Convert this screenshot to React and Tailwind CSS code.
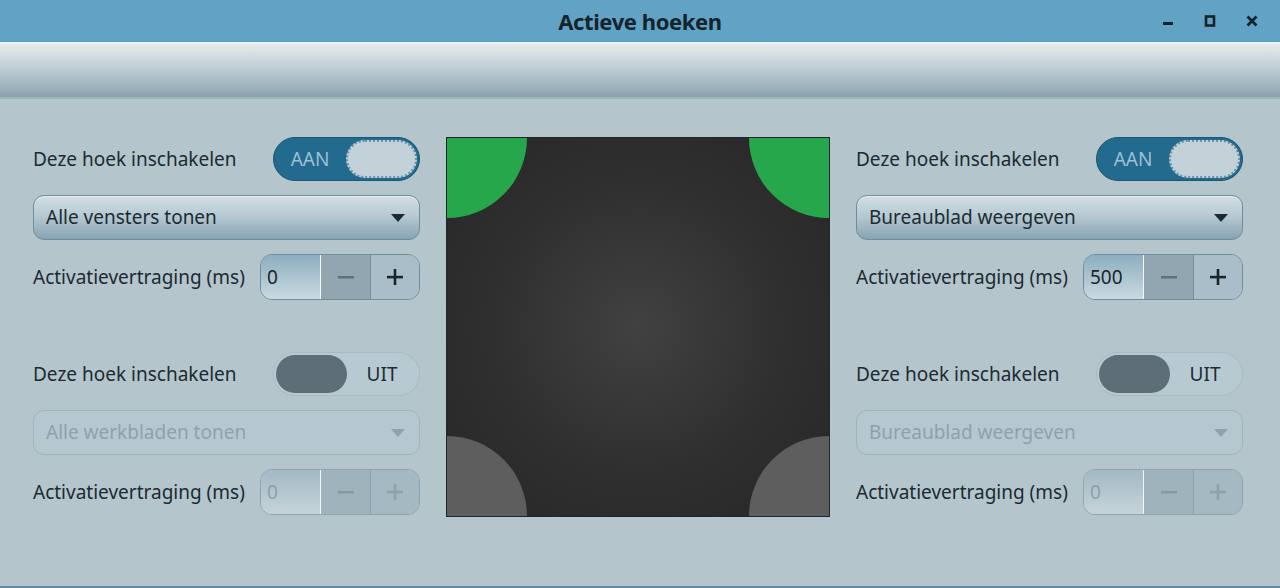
import React from 'react'

function Toggle({ on }) {
  if (on) {
    return (
      <div className="w-[147px] h-[44px] rounded-full bg-[#226a8e] border border-[#1b5673] flex items-center p-[2px]">
        <span className="flex-1 text-center text-[19px] text-[#9ec0d2] pr-[2px]">AAN</span>
        <div className="w-[71px] h-full rounded-full bg-[#c3d2d8] border-2 border-dotted border-[#6b93a8]" />
      </div>
    )
  }
  return (
    <div className="w-[147px] h-[44px] rounded-full bg-[#b8cad1] border border-[#a7bbc3] flex items-center p-[2px]">
      <div className="w-[71px] h-full rounded-full bg-[#5e6e76]" />
      <span className="flex-1 text-center text-[19px] text-[#1d2b33]">UIT</span>
    </div>
  )
}

function Select({ label, disabled }) {
  return (
    <div
      className={
        disabled
          ? 'h-[45px] rounded-[11px] border border-[#9fb4bd] bg-[#b6c8cf] flex items-center justify-between pl-[12px] pr-[14px]'
          : 'h-[45px] rounded-[11px] border border-[#6f8d9b] bg-gradient-to-b from-[#d3dfe4] via-[#b3c7d0] to-[#87a3b2] shadow-[inset_0_1px_0_#e6eef1] flex items-center justify-between pl-[12px] pr-[14px]'
      }
    >
      <span className={disabled ? 'text-[19px] text-[#8ea2ab]' : 'text-[19px] text-[#1c2a31]'}>{label}</span>
      <svg width="14" height="8" viewBox="0 0 14 8">
        <path d="M0 0 L14 0 L7 8 Z" fill={disabled ? '#8ea2ab' : '#1c2a31'} />
      </svg>
    </div>
  )
}

function Spin({ value, disabled }) {
  const ink = disabled ? '#8ea2ab' : '#1a262c'
  return (
    <div
      className={
        disabled
          ? 'w-[160px] h-[46px] rounded-[12px] border border-[#8ea4ae] overflow-hidden flex'
          : 'w-[160px] h-[46px] rounded-[12px] border border-[#6f8d9b] overflow-hidden flex'
      }
    >
      <div
        className={
          disabled
            ? 'w-[60px] bg-gradient-to-b from-[#a3b9c3] to-[#c6d4d9] flex items-center pl-[6px] border-r border-[#f4f7f8]'
            : 'w-[60px] bg-gradient-to-b from-[#8caebf] to-[#cadae0] flex items-center pl-[6px] border-r border-[#f4f7f8]'
        }
      >
        <span className="text-[19px]" style={{ color: ink }}>{value}</span>
      </div>
      <div
        className={
          disabled
            ? 'w-[50px] bg-[#9fb3bc] border-r border-[#8ca2ac] flex items-center justify-center'
            : 'w-[50px] bg-[#91a6b0] border-r border-[#778f9a] flex items-center justify-center'
        }
      >
        <svg width="18" height="18" viewBox="0 0 18 18">
          <rect x="1" y="8" width="16" height="2.5" fill={disabled ? '#8599a2' : '#5d717a'} />
        </svg>
      </div>
      <div className={disabled ? 'flex-1 bg-[#a5b9c2] flex items-center justify-center' : 'flex-1 bg-[#a9bec8] flex items-center justify-center'}>
        <svg width="18" height="18" viewBox="0 0 18 18">
          <rect x="1" y="7.8" width="16" height="2.6" fill={ink} />
          <rect x="7.7" y="1" width="2.6" height="16" fill={ink} />
        </svg>
      </div>
    </div>
  )
}

function Corner({ on, dropdown, delay }) {
  return (
    <div className="flex flex-col gap-[14px]">
      <div className="h-[44px] flex items-center justify-between">
        <span className="text-[19px] text-[#1c2a31]">Deze hoek inschakelen</span>
        <Toggle on={on} />
      </div>
      <Select label={dropdown} disabled={!on} />
      <div className="h-[46px] flex items-center justify-between">
        <span className="text-[19px] text-[#1c2a31]">Activatievertraging (ms)</span>
        <Spin value={delay} disabled={!on} />
      </div>
    </div>
  )
}

function Column({ top, bottom }) {
  return (
    <div className="w-[387px] flex flex-col gap-[52px]">
      <Corner {...top} />
      <Corner {...bottom} />
    </div>
  )
}

export default function App() {
  return (
    <div className="w-[1280px] h-[588px] flex flex-col bg-[#b4c6cc] overflow-hidden" style={{ fontFamily: '"Noto Sans", "Open Sans", sans-serif' }}>
      {/* Title bar */}
      <div className="h-[42px] bg-[#62a3c5] flex items-center relative">
        <div className="flex-1 text-center text-[22px] font-bold text-[#14232c] tracking-[-0.4px]">Actieve hoeken</div>
        <div className="absolute right-[22px] top-0 h-full flex items-center gap-[30px]">
          <svg width="12" height="12" viewBox="0 0 12 12"><rect x="1" y="7" width="10" height="3" fill="#14232c" /></svg>
          <svg width="12" height="12" viewBox="0 0 12 12"><rect x="2" y="1.5" width="8" height="9" fill="none" stroke="#14232c" strokeWidth="2.6" /></svg>
          <svg width="12" height="12" viewBox="0 0 12 12"><path d="M1.5 1.5 L10.5 10.5 M10.5 1.5 L1.5 10.5" stroke="#14232c" strokeWidth="2.8" /></svg>
        </div>
      </div>
      {/* Header bar */}
      <div className="h-[2px] bg-[#eaf5f9]" />
      <div className="h-[53px] bg-gradient-to-b from-[#e7eaed] via-[#bccbd2] to-[#8aa2ae]" />
      <div className="h-[2px] bg-[#9fb3bb]" />

      {/* Content */}
      <div className="flex-1 flex pl-[33px] pt-[38px] gap-[26px]">
        <Column
          top={{ on: true, dropdown: 'Alle vensters tonen', delay: '0' }}
          bottom={{ on: false, dropdown: 'Alle werkbladen tonen', delay: '0' }}
        />
        <div className="w-[384px] h-[380px] relative border border-[#1e272c] bg-[radial-gradient(circle_at_center,#414141_0%,#2f2f2f_55%,#262626_100%)] overflow-hidden">
          <div className="absolute -left-[80px] -top-[80px] w-[160px] h-[160px] rounded-full bg-[#27a74c]" />
          <div className="absolute -right-[80px] -top-[80px] w-[160px] h-[160px] rounded-full bg-[#27a74c]" />
          <div className="absolute -left-[80px] -bottom-[80px] w-[160px] h-[160px] rounded-full bg-[#5e5e5e]" />
          <div className="absolute -right-[80px] -bottom-[80px] w-[160px] h-[160px] rounded-full bg-[#5e5e5e]" />
        </div>
        <Column
          top={{ on: true, dropdown: 'Bureaublad weergeven', delay: '500' }}
          bottom={{ on: false, dropdown: 'Bureaublad weergeven', delay: '0' }}
        />
      </div>
      <div className="h-[2px] bg-[#5b8ba2]" />
    </div>
  )
}
